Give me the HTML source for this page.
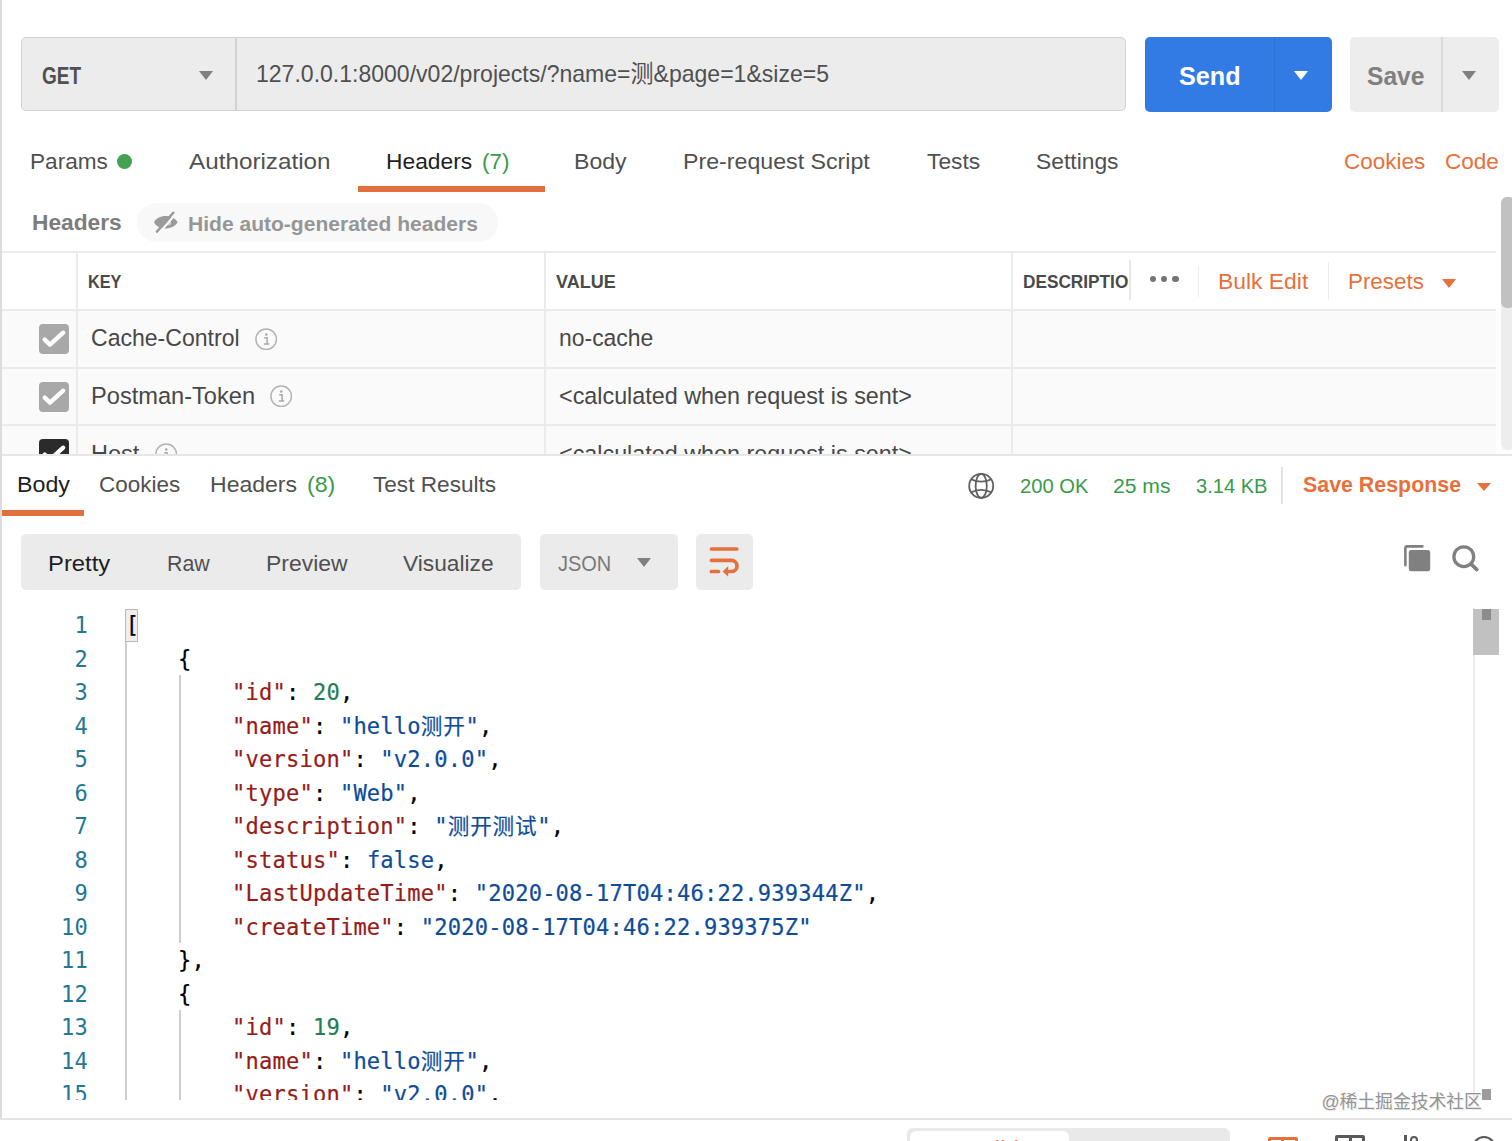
<!DOCTYPE html>
<html lang="zh">
<head>
<meta charset="utf-8">
<title>Postman</title>
<style>
*{box-sizing:border-box;margin:0;padding:0}
html,body{width:1512px;height:1141px;overflow:hidden;background:#fff}
body{position:relative;font-family:"Liberation Sans","Noto Sans CJK SC",sans-serif;color:#505050;font-size:22px}
.a{position:absolute;white-space:nowrap}
.t{position:absolute;white-space:nowrap;line-height:30px;height:30px;transform-origin:0 50%}
.tri{position:absolute;width:0;height:0;border-left:7.4px solid transparent;border-right:7.4px solid transparent;border-top:9px solid #808080}
.hl{position:absolute;height:2px;background:#ebebeb;left:2px;width:1494px}
.vl{position:absolute;width:2px;background:#ebebeb}
.cb{position:absolute;left:39px;width:30px;height:30px;border-radius:4px;background:#a8a8a8}
.info{position:absolute;width:22.4px;height:22.4px}
#code{left:0;top:600px;width:1473px;height:500.3px;overflow:hidden}
.ln,.cl{position:absolute;white-space:pre;font-family:"DejaVu Sans Mono","Noto Sans CJK SC",monospace;font-size:22.1px;letter-spacing:0.18px;line-height:33.5px;height:33.5px}
.ln{left:0;width:88px;text-align:right;color:#237893}
.cl{left:124.2px;color:#000;-webkit-text-stroke:0.2px}
.k{color:#981b17}.s{color:#0e4c9a}.n{color:#1f8058}
.cj{font-family:"Noto Sans CJK SC",sans-serif;font-size:21.6px;line-height:0;letter-spacing:0.8px}
.ig{position:absolute;width:1.8px;background:#cdcdcd}
</style>
</head>
<body>
<div class="a" style="left:0;top:0;width:2px;height:1120px;background:#dcdcdc"></div>
<div class="a" style="left:20.6px;top:37.1px;width:1105.4px;height:74.2px;background:#ececec;border:1.5px solid #d2d2d2;border-radius:5px"></div>
<div class="a" style="left:235px;top:38px;width:1.5px;height:72.5px;background:#d2d2d2"></div>
<div class="tri" style="left:199.3px;top:71px"></div>
<div class="a" style="left:1145px;top:37px;width:186.5px;height:74.5px;background:#327be4;border-radius:5px"></div>
<div class="a" style="left:1273.5px;top:37px;width:1.5px;height:74.5px;background:#2d71d4"></div>
<div class="tri" style="left:1294.2px;top:70.5px;border-top-color:#fff"></div>
<div class="a" style="left:1350px;top:37px;width:149px;height:75px;background:#ededed;border-radius:5px"></div>
<div class="a" style="left:1441.3px;top:37px;width:1.5px;height:75px;background:#dadada"></div>
<div class="tri" style="left:1461.6px;top:70.5px"></div>
<div class="a" style="left:117px;top:154px;width:15.4px;height:15.4px;border-radius:50%;background:#43a152"></div>
<div class="a" style="left:357.6px;top:186.4px;width:187.7px;height:5.2px;background:#e2703f"></div>
<div class="a" style="left:136.6px;top:202.5px;width:361px;height:39px;border-radius:20px;background:#f8f8f8"></div>
<svg class="a" style="left:152px;top:210px" width="28" height="24" viewBox="0 0 28 24"><path d="M2 12.3 C6 4 21 4 25.6 12.3 C21 20.6 6 20.6 2 12.3 Z" fill="#9a9a9a"/><circle cx="17" cy="13.2" r="2.1" fill="#cfcfcf"/><path d="M7.0 23.2 L23.4 4.3" stroke="#f8f8f8" stroke-width="2.2"/><path d="M4.9 21.6 L21.3 2.7" stroke="#9a9a9a" stroke-width="2.5" stroke-linecap="round"/></svg>
<div class="a" style="left:2px;top:310px;width:1494px;height:145px;background:#fafafa"></div>
<div class="hl" style="top:251.2px"></div>
<div class="hl" style="top:308.8px"></div>
<div class="hl" style="top:366.6px"></div>
<div class="hl" style="top:424.3px"></div>
<div class="vl" style="left:76.2px;top:252px;height:203px"></div>
<div class="vl" style="left:543.6px;top:252px;height:203px"></div>
<div class="vl" style="left:1011.4px;top:252px;height:203px"></div>
<div class="cb" style="top:324px"><svg width="30" height="30" viewBox="0 0 30 30"><path d="M5.7 15.6 L11 20.6 L24.2 8.7" fill="none" stroke="#fff" stroke-width="4.3" stroke-linecap="round" stroke-linejoin="round"/></svg></div>
<div class="cb" style="top:381.6px"><svg width="30" height="30" viewBox="0 0 30 30"><path d="M5.7 15.6 L11 20.6 L24.2 8.7" fill="none" stroke="#fff" stroke-width="4.3" stroke-linecap="round" stroke-linejoin="round"/></svg></div>
<div class="cb" style="top:439.2px;background:#2b2b2b"><svg width="30" height="30" viewBox="0 0 30 30"><path d="M5.7 15.6 L11 20.6 L24.2 8.7" fill="none" stroke="#fff" stroke-width="4.3" stroke-linecap="round" stroke-linejoin="round"/></svg></div>
<div class="info" style="left:255.1px;top:327.5px"><svg width="22.4" height="22.4" viewBox="0 0 22.4 22.4"><circle cx="11.2" cy="11.2" r="10.3" fill="none" stroke="#b2b2b2" stroke-width="1.5"/><circle cx="11.3" cy="6.6" r="1.25" fill="#a8a8a8"/><path d="M9.2 9.8 H12.1 V15.9 M8.9 16 H14.3" fill="none" stroke="#a8a8a8" stroke-width="1.5"/></svg></div>
<div class="info" style="left:270px;top:385.1px"><svg width="22.4" height="22.4" viewBox="0 0 22.4 22.4"><circle cx="11.2" cy="11.2" r="10.3" fill="none" stroke="#b2b2b2" stroke-width="1.5"/><circle cx="11.3" cy="6.6" r="1.25" fill="#a8a8a8"/><path d="M9.2 9.8 H12.1 V15.9 M8.9 16 H14.3" fill="none" stroke="#a8a8a8" stroke-width="1.5"/></svg></div>
<div class="info" style="left:154.6px;top:442.9px"><svg width="22.4" height="22.4" viewBox="0 0 22.4 22.4"><circle cx="11.2" cy="11.2" r="10.3" fill="none" stroke="#b2b2b2" stroke-width="1.5"/><circle cx="11.3" cy="6.6" r="1.25" fill="#a8a8a8"/><path d="M9.2 9.8 H12.1 V15.9 M8.9 16 H14.3" fill="none" stroke="#a8a8a8" stroke-width="1.5"/></svg></div>
<div class="a" style="left:20.7px;top:534.2px;width:500.5px;height:55.7px;border-radius:5px;background:#ebebeb"></div>
<div class="a" style="left:540.3px;top:534.2px;width:137.4px;height:55.7px;border-radius:5px;background:#ebebeb"></div>
<div class="a" style="left:907.4px;top:1127.6px;width:323px;height:30px;border-radius:6px;background:#e9e9e9"></div>
<div class="a" style="left:910px;top:1131.4px;width:158.8px;height:30px;border-radius:6px;background:#fff"></div>
<div class="t" style="left:41.70px;top:60.69px;font-size:23.4px;color:#505050;transform:scaleX(0.8116);font-weight:bold">GET</div>
<div class="t" style="left:256.22px;top:58.69px;font-size:23.4px;color:#505050;transform:scaleX(0.9846)">127.0.0.1:8000/v02/projects/?name=测&amp;page=1&amp;size=5</div>
<div class="t" style="left:1178.90px;top:61.19px;font-size:26px;color:#ffffff;transform:scaleX(0.9684);font-weight:bold">Send</div>
<div class="t" style="left:1367.00px;top:61.19px;font-size:26px;color:#808080;transform:scaleX(0.9459);font-weight:bold">Save</div>
<div class="t" style="left:29.87px;top:146.68px;font-size:22px;color:#505050;transform:scaleX(1.0268)">Params</div>
<div class="t" style="left:189.10px;top:146.68px;font-size:22px;color:#505050;transform:scaleX(1.1024)">Authorization</div>
<div class="t" style="left:386.06px;top:146.68px;font-size:22px;color:#1e1e1e;transform:scaleX(1.0358)">Headers</div>
<div class="t" style="left:482.08px;top:146.68px;font-size:22px;color:#399b4a;transform:scaleX(1.0219)">(7)</div>
<div class="t" style="left:574.15px;top:146.68px;font-size:22px;color:#505050;transform:scaleX(1.0479)">Body</div>
<div class="t" style="left:682.65px;top:146.68px;font-size:22px;color:#505050;transform:scaleX(1.0535)">Pre-request Script</div>
<div class="t" style="left:926.50px;top:146.68px;font-size:22px;color:#505050;transform:scaleX(1.0361)">Tests</div>
<div class="t" style="left:1035.56px;top:146.68px;font-size:22px;color:#505050;transform:scaleX(1.0383)">Settings</div>
<div class="t" style="left:1344.48px;top:146.68px;font-size:22px;color:#e8703a;transform:scaleX(1.0206)">Cookies</div>
<div class="t" style="left:1444.78px;top:146.68px;font-size:22px;color:#e8703a;transform:scaleX(1.0242)">Code</div>
<div class="t" style="left:31.77px;top:208.08px;font-size:22px;color:#7c7c7c;transform:scaleX(1.0328);font-weight:bold">Headers</div>
<div class="t" style="left:188.47px;top:208.60px;font-size:20.5px;color:#969696;transform:scaleX(1.0263);font-weight:bold">Hide auto-generated headers</div>
<div class="t" style="left:87.65px;top:267.12px;font-size:19px;color:#4a4a4a;transform:scaleX(0.8543);font-weight:bold">KEY</div>
<div class="t" style="left:555.90px;top:267.12px;font-size:19px;color:#4a4a4a;transform:scaleX(0.9469);font-weight:bold">VALUE</div>
<div class="t" style="left:1022.89px;top:267.12px;font-size:19px;color:#4a4a4a;transform:scaleX(0.9069);font-weight:bold">DESCRIPTION</div>
<div class="t" style="left:1217.86px;top:267.28px;font-size:22px;color:#e8703a;transform:scaleX(1.0396)">Bulk Edit</div>
<div class="t" style="left:1347.78px;top:267.28px;font-size:22px;color:#e8703a;transform:scaleX(1.0165)">Presets</div>
<div class="t" style="left:90.93px;top:323.09px;font-size:23.7px;color:#484848;transform:scaleX(0.9730)">Cache-Control</div>
<div class="t" style="left:558.83px;top:323.09px;font-size:23.7px;color:#484848;transform:scaleX(0.9681)">no-cache</div>
<div class="t" style="left:90.90px;top:380.59px;font-size:23.7px;color:#484848;transform:scaleX(0.9969)">Postman-Token</div>
<div class="t" style="left:558.81px;top:380.59px;font-size:23.7px;color:#484848;transform:scaleX(0.9853)">&lt;calculated when request is sent&gt;</div>
<div class="t" style="left:90.91px;top:439.09px;font-size:23.7px;color:#484848;transform:scaleX(0.9933)">Host</div>
<div class="t" style="left:558.81px;top:439.09px;font-size:23.7px;color:#484848;transform:scaleX(0.9853)">&lt;calculated when request is sent&gt;</div>
<div class="t" style="left:16.84px;top:470.18px;font-size:22px;color:#1e1e1e;transform:scaleX(1.0561)">Body</div>
<div class="t" style="left:99.38px;top:470.18px;font-size:22px;color:#505050;transform:scaleX(1.0206)">Cookies</div>
<div class="t" style="left:210.45px;top:470.18px;font-size:22px;color:#505050;transform:scaleX(1.0468)">Headers</div>
<div class="t" style="left:306.75px;top:470.18px;font-size:22px;color:#399b4a;transform:scaleX(1.0504)">(8)</div>
<div class="t" style="left:373.10px;top:470.18px;font-size:22px;color:#505050;transform:scaleX(1.0274)">Test Results</div>
<div class="t" style="left:1020.02px;top:470.70px;font-size:20.5px;color:#399b4a;transform:scaleX(0.9834)">200 OK</div>
<div class="t" style="left:1113.07px;top:470.70px;font-size:20.5px;color:#399b4a;transform:scaleX(1.0298)">25 ms</div>
<div class="t" style="left:1195.70px;top:470.70px;font-size:20.5px;color:#399b4a;transform:scaleX(0.9797)">3.14 KB</div>
<div class="t" style="left:1303.10px;top:470.35px;font-size:21.5px;color:#e8703a;transform:scaleX(0.9944);font-weight:bold">Save Response</div>
<div class="t" style="left:48.12px;top:548.68px;font-size:22px;color:#1e1e1e;transform:scaleX(1.0822)">Pretty</div>
<div class="t" style="left:166.63px;top:548.68px;font-size:22px;color:#505050;transform:scaleX(0.9716)">Raw</div>
<div class="t" style="left:265.96px;top:548.68px;font-size:22px;color:#505050;transform:scaleX(1.0432)">Preview</div>
<div class="t" style="left:403.40px;top:548.68px;font-size:22px;color:#505050;transform:scaleX(1.0342)">Visualize</div>
<div class="t" style="left:557.70px;top:548.68px;font-size:22px;color:#7a7a7a;transform:scaleX(0.9085)">JSON</div>
<div class="t" style="left:964.90px;top:1134.28px;font-size:22px;color:#e8703a;transform:scaleX(1.1031)">Build</div>
<div class="t" style="left:1113.00px;top:1134.28px;font-size:22px;color:#505050;transform:scaleX(0.9983)">Browse</div>
<div class="a" style="left:1128.6px;top:254px;width:90px;height:54px;background:#fff"></div>
<div class="a" style="left:1129.2px;top:260px;width:1.5px;height:40px;background:#e8e8e8"></div>
<div class="a" style="left:1197.8px;top:266px;width:1.5px;height:31px;background:#ececec"></div>
<div class="a" style="left:1327.6px;top:262px;width:1.5px;height:38px;background:#ececec"></div>
<div class="a" style="left:1149.6px;top:275.8px;width:6.6px;height:6.6px;border-radius:50%;background:#747474"></div>
<div class="a" style="left:1160.8px;top:275.8px;width:6.6px;height:6.6px;border-radius:50%;background:#747474"></div>
<div class="a" style="left:1172.0px;top:275.8px;width:6.6px;height:6.6px;border-radius:50%;background:#747474"></div>
<div class="tri" style="left:1441.5px;top:279.2px;border-top-color:#e8703a"></div>
<div class="a" style="left:1501px;top:197px;width:14px;height:253px;border-radius:6px;background:#ededed"></div>
<div class="a" style="left:1501px;top:197px;width:14px;height:110.5px;border-radius:6px;background:#c1c1c1"></div>
<div class="a" style="left:0;top:454px;width:1512px;height:16px;background:#fff"></div>
<div class="a" style="left:0;top:454px;width:1512px;height:2px;background:#e6e6e6"></div>
<div class="a" style="left:0;top:0;width:2px;height:1120px;background:#dcdcdc"></div>
<div class="a" style="left:1.7px;top:510px;width:82px;height:6px;background:#e2703f"></div>
<svg class="a" style="left:966px;top:471px" width="30" height="30" viewBox="0 0 30 30" fill="none" stroke="#606060" stroke-width="1.8"><circle cx="15.2" cy="14.9" r="12"/><ellipse cx="15.2" cy="14.9" rx="5.6" ry="12"/><path d="M5 8.2 Q15.2 13.2 25.4 8.2 M5 21.4 Q15.2 16.4 25.4 21.4"/></svg>
<div class="a" style="left:1281.2px;top:467px;width:1.5px;height:37px;background:#e4e4e4"></div>
<div class="tri" style="left:1477.2px;top:482.6px;border-top-color:#e8703a;border-left-width:7px;border-right-width:7px;border-top-width:8.2px"></div>
<div class="tri" style="left:636.8px;top:558.4px"></div>
<div class="a" style="left:696.2px;top:534.1px;width:56.7px;height:55.9px;border-radius:5px;background:#ebebeb"></div>
<svg class="a" style="left:697px;top:534px" width="56" height="56" viewBox="0 0 56 56" fill="none" stroke="#e4703c" stroke-width="3.7" stroke-linecap="round"><path d="M14.4 15 H39.7"/><path d="M14.4 26.3 H34.4 A5.6 5.6 0 0 1 34.4 37.5 H31"/><path d="M14.4 37.5 H21.4"/><path d="M25.6 37.5 L31.2 32.2 V42.8 Z" fill="#e4703c" stroke="none"/></svg>
<svg class="a" style="left:1400px;top:540px" width="84" height="36" viewBox="0 0 84 36"><path d="M5.4 25.2 V8.2 Q5.4 6.4 7.2 6.4 H22.4" fill="none" stroke="#808080" stroke-width="2.6" stroke-linecap="round"/><rect x="8.8" y="9.9" width="21.4" height="21.4" rx="2.4" fill="#808080"/><circle cx="63.8" cy="16.7" r="9.9" fill="none" stroke="#808080" stroke-width="3.3"/><path d="M70.9 23.9 L76.8 29.6" stroke="#808080" stroke-width="3.6" stroke-linecap="round"/></svg>
<div class="a" id="code">
<div class="ig" style="left:125.2px;top:41px;height:470px"></div>
<div class="ig" style="left:179px;top:75px;height:268px"></div>
<div class="ig" style="left:179px;top:410px;height:100px"></div>
<div class="a" style="left:125px;top:8.7px;width:12.8px;height:33px;border:1.4px solid #b9b9b9;background:#eeeeee"></div>
<div class="ln" style="top:9.0px">1</div>
<div class="cl" style="top:9.0px"><span style="position:relative;left:1.6px">[</span></div>
<div class="ln" style="top:42.5px">2</div>
<div class="cl" style="top:42.5px">    {</div>
<div class="ln" style="top:76.0px">3</div>
<div class="cl" style="top:76.0px">        <span class="k">"id"</span>: <span class="n">20</span>,</div>
<div class="ln" style="top:109.5px">4</div>
<div class="cl" style="top:109.5px">        <span class="k">"name"</span>: <span class="s">"hello<span class="cj">测开</span>"</span>,</div>
<div class="ln" style="top:143.0px">5</div>
<div class="cl" style="top:143.0px">        <span class="k">"version"</span>: <span class="s">"v2.0.0"</span>,</div>
<div class="ln" style="top:176.5px">6</div>
<div class="cl" style="top:176.5px">        <span class="k">"type"</span>: <span class="s">"Web"</span>,</div>
<div class="ln" style="top:210.0px">7</div>
<div class="cl" style="top:210.0px">        <span class="k">"description"</span>: <span class="s">"<span class="cj">测开测试</span>"</span>,</div>
<div class="ln" style="top:243.5px">8</div>
<div class="cl" style="top:243.5px">        <span class="k">"status"</span>: <span class="s">false</span>,</div>
<div class="ln" style="top:277.0px">9</div>
<div class="cl" style="top:277.0px">        <span class="k">"LastUpdateTime"</span>: <span class="s">"2020-08-17T04:46:22.939344Z"</span>,</div>
<div class="ln" style="top:310.5px">10</div>
<div class="cl" style="top:310.5px">        <span class="k">"createTime"</span>: <span class="s">"2020-08-17T04:46:22.939375Z"</span></div>
<div class="ln" style="top:344.0px">11</div>
<div class="cl" style="top:344.0px">    },</div>
<div class="ln" style="top:377.5px">12</div>
<div class="cl" style="top:377.5px">    {</div>
<div class="ln" style="top:411.0px">13</div>
<div class="cl" style="top:411.0px">        <span class="k">"id"</span>: <span class="n">19</span>,</div>
<div class="ln" style="top:444.5px">14</div>
<div class="cl" style="top:444.5px">        <span class="k">"name"</span>: <span class="s">"hello<span class="cj">测开</span>"</span>,</div>
<div class="ln" style="top:478.0px">15</div>
<div class="cl" style="top:478.0px">        <span class="k">"version"</span>: <span class="s">"v2.0.0"</span>,</div>
</div>
<div class="a" style="left:1473.3px;top:608px;width:1.3px;height:492px;background:#ececec"></div>
<div class="a" style="left:1473.3px;top:608.6px;width:25.7px;height:46.4px;background:#c1c1c1"></div>
<div class="a" style="left:1482px;top:608.6px;width:8.8px;height:11.4px;background:#8c8c8c"></div>
<div class="a" style="left:1482px;top:1089px;width:8.8px;height:10.8px;background:#9c9c9c"></div>
<div class="a" style="left:1321.5px;top:1089.4px;font-size:17.8px;line-height:26px;color:#939393;font-family:'Liberation Sans','Noto Sans CJK SC',sans-serif;text-shadow:0 0 2px #fff,1px 1px 0 #e8e8e8">@稀土掘金技术社区</div>
<div class="a" style="left:0;top:1118.2px;width:1512px;height:2px;background:#e4e4e4"></div>
<div class="a" style="left:1268px;top:1136.6px;width:29.6px;height:20px;border:3px solid #e4703c;border-radius:2px"></div>
<div class="a" style="left:1281.3px;top:1138px;width:3px;height:10px;background:#e4703c"></div>
<div class="a" style="left:1335.2px;top:1135.2px;width:30px;height:20px;border:3px solid #5a5a5a;border-radius:2px"></div>
<div class="a" style="left:1348.6px;top:1137px;width:3px;height:10px;background:#5a5a5a"></div>
<div class="a" style="left:1404.2px;top:1135px;width:2.4px;height:10px;background:#5a5a5a"></div>
<div class="a" style="left:1409.6px;top:1136px;width:8px;height:8px;border:2.2px solid #5a5a5a;border-radius:50%"></div>
<div class="a" style="left:1472.2px;top:1135.6px;width:24px;height:24px;border:2.4px solid #5a5a5a;border-radius:50%"></div>
</body>
</html>
